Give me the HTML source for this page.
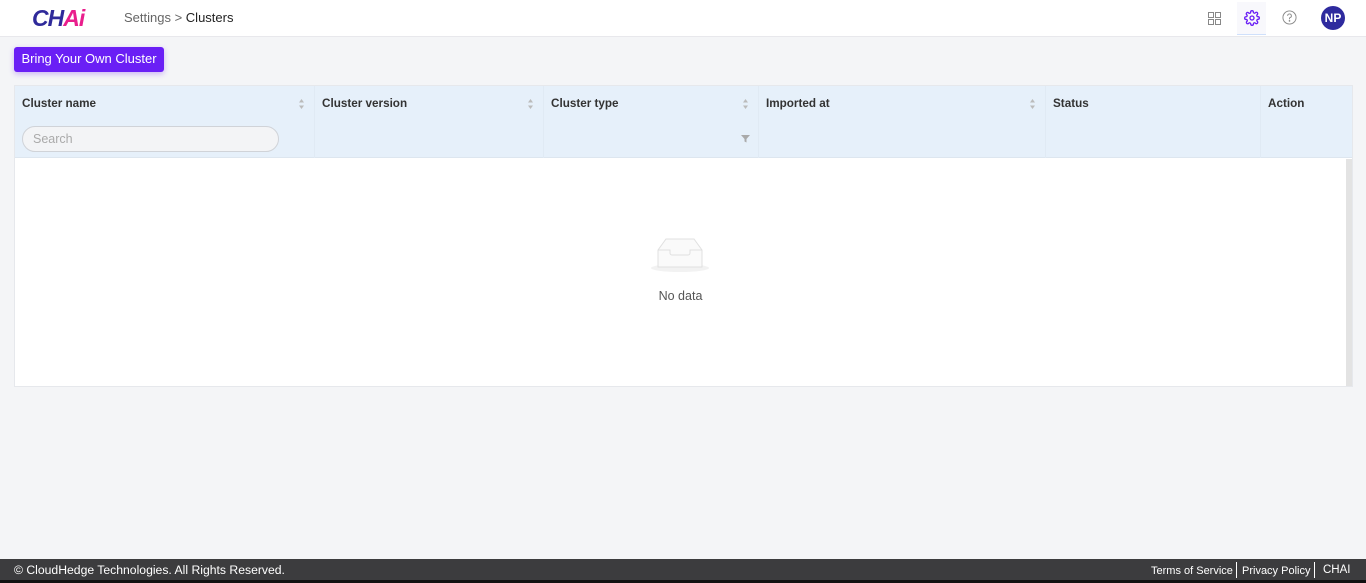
<!DOCTYPE html>
<html><head><meta charset="utf-8"><style>
*{box-sizing:border-box;margin:0;padding:0}
body{width:1366px;height:583px;background:#f4f5f7;font-family:"Liberation Sans",sans-serif;position:relative;overflow:hidden}
.top{position:absolute;left:0;top:0;width:1366px;height:37px;background:#fff;border-bottom:1px solid #e8e8ec}
.logo{position:absolute;left:32px;top:5px;font-size:23px;font-weight:bold;font-style:italic;color:#2f2a9a;letter-spacing:-1px}
.logo span{color:#e91e8c}
.bc{position:absolute;left:124px;top:10px;font-size:13px;color:#666}
.bc b{font-weight:normal;color:#222}
.btn{position:absolute;left:14px;top:47px;width:150px;height:25px;background:#6a1ff5;border-radius:3px;color:#fff;font-size:13px;line-height:24px;text-align:center;box-shadow:0 2px 6px rgba(106,31,245,.3)}
.tbl{position:absolute;left:14px;top:85px;width:1339px;height:302px;background:#fff;border:1px solid #e6e8ec}
.hd{position:absolute;left:0;top:0;width:1337px;height:72px;background:#e6f0fa;border-bottom:1px solid #dde6ef}
.th{position:absolute;top:0;height:72px;border-right:1px solid #e0eaf4;font-size:11.7px;font-weight:bold;color:#333}
.th .t{position:absolute;left:7px;top:11px}
.sort{position:absolute;top:12px;width:7px;height:12px}
.search{position:absolute;left:7px;top:40px;width:257px;height:26px;border:1px solid #d0d3d8;border-radius:13px;background:#f3f4f6;font-size:12.5px;color:#aaa;padding:5px 10px;font-weight:normal}
.sb{position:absolute;left:1331px;top:73px;width:6px;height:227px;background:#e3e3e3}
.empty{position:absolute;left:636px;top:150px}
.nd{position:absolute;left:0;width:1331px;top:203px;text-align:center;font-size:12.5px;color:#555}
.foot{position:absolute;left:0;top:559px;width:1366px;height:21px;background:#3c3c3e;color:#fff;font-size:11.5px}
.foot:after{content:"";position:absolute;left:0;top:21px;width:1366px;height:3px;background:#111}
</style></head><body>
<div class="top">
<div class="logo">CH<span>Ai</span></div>
<div class="bc">Settings &gt;&nbsp;<b>Clusters</b></div>
<svg style="position:absolute;left:1208px;top:12px" width="13" height="13" viewBox="0 0 13 13" fill="none" stroke="#888" stroke-width="1"><rect x=".5" y=".5" width="5" height="5"/><rect x="7.5" y=".5" width="5" height="5"/><rect x=".5" y="7.5" width="5" height="5"/><rect x="7.5" y="7.5" width="5" height="5"/></svg>
<div style="position:absolute;left:1237px;top:2px;width:29px;height:33px;background:#f8f8fc;border-bottom:1px solid #cfe0fb"></div>
<svg style="position:absolute;left:1244px;top:10px" width="16" height="16" viewBox="0 0 24 24" fill="none" stroke="#6a1ff5" stroke-width="2"><circle cx="12" cy="12" r="3"/><path d="M19.4 15a1.6 1.6 0 0 0 .3 1.8l.1.1a2 2 0 1 1-2.8 2.8l-.1-.1a1.6 1.6 0 0 0-1.8-.3 1.6 1.6 0 0 0-1 1.5V21a2 2 0 1 1-4 0v-.1a1.6 1.6 0 0 0-1-1.5 1.6 1.6 0 0 0-1.8.3l-.1.1a2 2 0 1 1-2.8-2.8l.1-.1a1.6 1.6 0 0 0 .3-1.8 1.6 1.6 0 0 0-1.5-1H3a2 2 0 1 1 0-4h.1a1.6 1.6 0 0 0 1.5-1 1.6 1.6 0 0 0-.3-1.8l-.1-.1a2 2 0 1 1 2.8-2.8l.1.1a1.6 1.6 0 0 0 1.8.3H9a1.6 1.6 0 0 0 1-1.5V3a2 2 0 1 1 4 0v.1a1.6 1.6 0 0 0 1 1.5 1.6 1.6 0 0 0 1.8-.3l.1-.1a2 2 0 1 1 2.8 2.8l-.1.1a1.6 1.6 0 0 0-.3 1.8V9a1.6 1.6 0 0 0 1.5 1H21a2 2 0 1 1 0 4h-.1a1.6 1.6 0 0 0-1.5 1z"/></svg>
<svg style="position:absolute;left:1282px;top:10px" width="15" height="15" viewBox="0 0 16 16" fill="none" stroke="#888" stroke-width="1"><circle cx="8" cy="8" r="7"/><path d="M6 6.2a2 2 0 1 1 2.6 1.9c-.4.2-.6.5-.6.9v.8"/><circle cx="8" cy="11.6" r=".4" fill="#888"/></svg>
<div style="position:absolute;left:1321px;top:6px;width:24px;height:24px;border-radius:50%;background:#2e2a9e;color:#fff;font-size:12px;font-weight:bold;text-align:center;line-height:24px">NP</div>
</div>
<div class="btn">Bring Your Own Cluster</div>
<div class="tbl">
<div class="hd">
<div class="th" style="left:0;width:300px"><span class="t">Cluster name</span><svg class="sort" style="left:283px" viewBox="0 0 7 12"><path d="M3.5 1L6 4.5H1z M3.5 11L6 7.5H1z" fill="#bbb"/></svg><div class="search">Search</div></div>
<div class="th" style="left:300px;width:229px"><span class="t">Cluster version</span><svg class="sort" style="left:212px" viewBox="0 0 7 12"><path d="M3.5 1L6 4.5H1z M3.5 11L6 7.5H1z" fill="#bbb"/></svg></div>
<div class="th" style="left:529px;width:215px"><span class="t">Cluster type</span><svg class="sort" style="left:198px" viewBox="0 0 7 12"><path d="M3.5 1L6 4.5H1z M3.5 11L6 7.5H1z" fill="#bbb"/></svg><svg style="position:absolute;left:197px;top:48px" width="9" height="9" viewBox="0 0 9 9"><path d="M0 1h9L5.5 5v3.5L3.5 7.5V5z" fill="#aaa"/></svg></div>
<div class="th" style="left:744px;width:287px"><span class="t">Imported at</span><svg class="sort" style="left:270px" viewBox="0 0 7 12"><path d="M3.5 1L6 4.5H1z M3.5 11L6 7.5H1z" fill="#bbb"/></svg></div>
<div class="th" style="left:1031px;width:215px"><span class="t">Status</span></div>
<div class="th" style="left:1246px;width:91px;border-right:none"><span class="t">Action</span></div>
</div>
<div class="sb"></div>
<svg class="empty" width="58" height="38" viewBox="0 0 58 38"><ellipse cx="29" cy="32" rx="29" ry="4" fill="#f2f2f2"/><path d="M7 14L15 3h28l8 11v17H7z" fill="#fafafa" stroke="#e0e0e0"/><path d="M7 14h12v3a2 2 0 0 0 2 2h16a2 2 0 0 0 2-2v-3h12" fill="none" stroke="#e0e0e0"/></svg>
<div class="nd">No data</div>
</div>
<div class="foot">
<span style="position:absolute;left:14px;top:4px;font-size:12.2px">© CloudHedge Technologies. All Rights Reserved.</span>
<span style="position:absolute;left:1151px;top:6px;font-size:11px">Terms of Service</span>
<span style="position:absolute;left:1236px;top:3px;width:1px;height:16px;background:#fff"></span>
<span style="position:absolute;left:1242px;top:6px;font-size:11px">Privacy Policy</span>
<span style="position:absolute;left:1314px;top:3px;width:1px;height:16px;background:#fff"></span>
<span style="position:absolute;left:1323px;top:5px;font-size:11.5px">CHAI</span>
</div>
</body></html>
